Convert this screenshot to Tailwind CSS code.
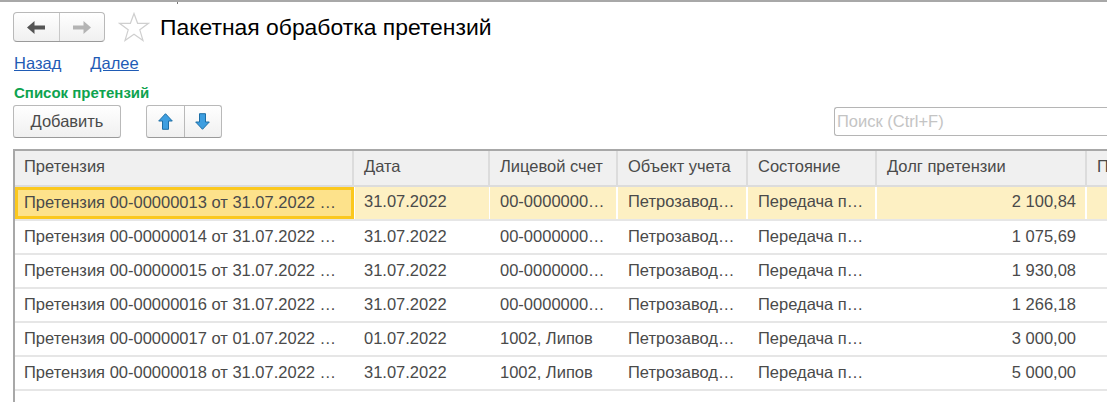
<!DOCTYPE html>
<html lang="ru">
<head>
<meta charset="UTF-8">
<title>Пакетная обработка претензий</title>
<script src="https://cdn.jsdelivr.net/npm/@tailwindcss/browser@4"></script>
</head>
<body class="bg-white w-[1107px] h-[402px] overflow-hidden font-['Liberation_Sans',Arial,sans-serif] text-[16.5px] text-[#4a4a4a]">
<div class="relative h-[2px] border-t-2 border-[#a8a8a8]">
  <div class="absolute left-[177px] top-0 w-[1px] h-[2px] bg-[#777]"></div>
</div>

<!-- header -->
<div class="flex items-center h-[42px] mt-[4px] pl-[13px]">
  <div class="flex shrink-0 w-[92px] h-[30px] rounded-[4px] border border-[#b9b9b9] border-b-[#9a9a9a] bg-gradient-to-b from-white to-[#f0f0f0]">
    <div class="flex-1 flex items-center justify-center border-r border-[#c8c8c8]">
      <svg width="18" height="13" viewBox="0 0 18 13"><path d="M0 6.5 L7.5 0 V4.5 H18 V8.5 H7.5 V13 Z" fill="#555"/></svg>
    </div>
    <div class="flex-1 flex items-center justify-center">
      <svg width="18" height="13" viewBox="0 0 18 13"><path d="M18 6.5 L10.5 0 V4.5 H0 V8.5 H10.5 V13 Z" fill="#b4b4b4"/></svg>
    </div>
  </div>
  <svg class="ml-[13px]" width="32" height="30" viewBox="0 0 32 30"><path d="M16 1.5 L19.6 11.3 H30.5 L21.8 17.8 L25 28.5 L16 22.2 L7 28.5 L10.2 17.8 L1.5 11.3 H12.4 Z" fill="none" stroke="#cfcfcf" stroke-width="1.2"/></svg>
  <h1 class="ml-[10px] text-[22.9px] leading-none text-black whitespace-nowrap">Пакетная обработка претензий</h1>
</div>

<!-- links -->
<div class="flex gap-[29px] mt-[5px] h-[20px] pl-[14px] text-[#1f5bb5] underline leading-[20px]">
  <a href="#">Назад</a>
  <a href="#">Далее</a>
</div>

<div class="mt-[12px] h-[16px] pl-[14px] text-[15px] leading-[16px] font-bold text-[#0da34f]">Список претензий</div>

<!-- toolbar -->
<div class="flex items-center h-[33px] mt-[4px] pl-[13px]">
  <button class="shrink-0 w-[108px] h-[33px] rounded-[3px] border border-[#b9b9b9] border-b-[#9a9a9a] bg-gradient-to-b from-white to-[#f0f0f0]">Добавить</button>
  <div class="flex shrink-0 ml-[25px] w-[76px] h-[33px] rounded-[3px] border border-[#b9b9b9] border-b-[#9a9a9a] bg-gradient-to-b from-white to-[#f0f0f0]">
    <div class="flex-1 flex items-center justify-center border-r border-[#b9b9b9]">
      <svg width="15" height="17" viewBox="0 0 15 17"><path d="M7.5 0.7 L14.3 8 H10.5 V16.3 H4.5 V8 H0.7 Z" fill="#3d9ee0" stroke="#1c6ea6"/></svg>
    </div>
    <div class="flex-1 flex items-center justify-center">
      <svg width="15" height="17" viewBox="0 0 15 17"><path d="M7.5 16.3 L14.3 9 H10.5 V0.7 H4.5 V9 H0.7 Z" fill="#3d9ee0" stroke="#1c6ea6"/></svg>
    </div>
  </div>
  <div class="shrink-0 ml-[612px] w-[273px] h-[29px] rounded-l-[3px] border border-r-0 border-[#b5b5b5] pl-[2px] leading-[27px] text-[#c4c4c4]">Поиск (Ctrl+F)</div>
</div>

<!-- table -->
<div class="mt-[11px] ml-[13px] border-l-2 border-t-2 border-[#a8a8a8] w-[1094px] h-[260px] overflow-hidden">
  <div class="grid grid-cols-[339px_136px_128px_130px_129px_210px_30px] h-[36px] bg-[#f0f0f0] border-b-2 border-[#dcdcdc] leading-[31px]">
    <div class="pl-[9px] border-r-2 border-[#dcdcdc]">Претензия</div>
    <div class="pl-[10px] border-r-2 border-[#dcdcdc]">Дата</div>
    <div class="pl-[10px] border-r-2 border-[#dcdcdc]">Лицевой счет</div>
    <div class="pl-[10px] border-r-2 border-[#dcdcdc]">Объект учета</div>
    <div class="pl-[10px] border-r-2 border-[#dcdcdc]">Состояние</div>
    <div class="pl-[10px] border-r-2 border-[#dcdcdc]">Долг претензии</div>
    <div class="pl-[10px]">П</div>
  </div>
  <div class="grid grid-cols-[339px_136px_128px_130px_129px_210px_30px] h-[34px] bg-[#fdf0c3] border-b-2 border-[#e6e6e6] leading-[30px]">
    <div class="pl-[6px] border-[3px] border-[#fbc81e] bg-[#fde28b] leading-[24px] whitespace-nowrap">Претензия 00-00000013 от 31.07.2022 …</div>
    <div class="pl-[9px] border-x border-white leading-[28px]">31.07.2022</div>
    <div class="pl-[10px] border-r-2 border-white leading-[28px]">00-0000000…</div>
    <div class="pl-[10px] border-r-2 border-white leading-[28px]">Петрозавод…</div>
    <div class="pl-[10px] border-r-2 border-white leading-[28px]">Передача п…</div>
    <div class="pr-[9px] text-right border-r-2 border-white leading-[28px]">2 100,84</div>
    <div></div>
  </div>
  <div class="grid grid-cols-[339px_136px_128px_130px_129px_210px_30px] h-[34px] border-b-2 border-[#e6e6e6] leading-[30px]">
    <div class="pl-[9px] whitespace-nowrap">Претензия 00-00000014 от 31.07.2022 …</div>
    <div class="pl-[10px]">31.07.2022</div>
    <div class="pl-[10px]">00-0000000…</div>
    <div class="pl-[10px]">Петрозавод…</div>
    <div class="pl-[10px]">Передача п…</div>
    <div class="pr-[11px] text-right">1 075,69</div>
    <div></div>
  </div>
  <div class="grid grid-cols-[339px_136px_128px_130px_129px_210px_30px] h-[34px] border-b-2 border-[#e6e6e6] leading-[30px]">
    <div class="pl-[9px] whitespace-nowrap">Претензия 00-00000015 от 31.07.2022 …</div>
    <div class="pl-[10px]">31.07.2022</div>
    <div class="pl-[10px]">00-0000000…</div>
    <div class="pl-[10px]">Петрозавод…</div>
    <div class="pl-[10px]">Передача п…</div>
    <div class="pr-[11px] text-right">1 930,08</div>
    <div></div>
  </div>
  <div class="grid grid-cols-[339px_136px_128px_130px_129px_210px_30px] h-[34px] border-b-2 border-[#e6e6e6] leading-[30px]">
    <div class="pl-[9px] whitespace-nowrap">Претензия 00-00000016 от 31.07.2022 …</div>
    <div class="pl-[10px]">31.07.2022</div>
    <div class="pl-[10px]">00-0000000…</div>
    <div class="pl-[10px]">Петрозавод…</div>
    <div class="pl-[10px]">Передача п…</div>
    <div class="pr-[11px] text-right">1 266,18</div>
    <div></div>
  </div>
  <div class="grid grid-cols-[339px_136px_128px_130px_129px_210px_30px] h-[34px] border-b-2 border-[#e6e6e6] leading-[30px]">
    <div class="pl-[9px] whitespace-nowrap">Претензия 00-00000017 от 01.07.2022 …</div>
    <div class="pl-[10px]">01.07.2022</div>
    <div class="pl-[10px]">1002, Липов</div>
    <div class="pl-[10px]">Петрозавод…</div>
    <div class="pl-[10px]">Передача п…</div>
    <div class="pr-[11px] text-right">3 000,00</div>
    <div></div>
  </div>
  <div class="grid grid-cols-[339px_136px_128px_130px_129px_210px_30px] h-[34px] border-b-2 border-[#e6e6e6] leading-[30px]">
    <div class="pl-[9px] whitespace-nowrap">Претензия 00-00000018 от 31.07.2022 …</div>
    <div class="pl-[10px]">31.07.2022</div>
    <div class="pl-[10px]">1002, Липов</div>
    <div class="pl-[10px]">Петрозавод…</div>
    <div class="pl-[10px]">Передача п…</div>
    <div class="pr-[11px] text-right">5 000,00</div>
    <div></div>
  </div>
</div>
</body>
</html>
